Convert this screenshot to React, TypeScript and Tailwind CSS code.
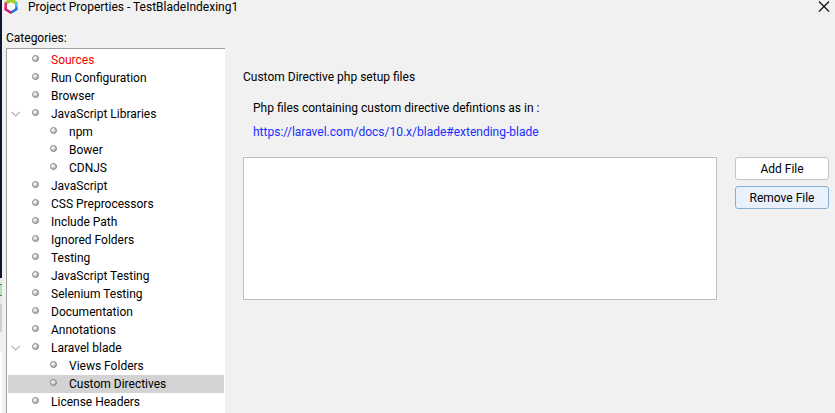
import React from "react";

type Item = { label: string; level: 1 | 2; open?: boolean; error?: boolean; selected?: boolean };

const items: Item[] = [
  { label: "Sources", level: 1, error: true },
  { label: "Run Configuration", level: 1 },
  { label: "Browser", level: 1 },
  { label: "JavaScript Libraries", level: 1, open: true },
  { label: "npm", level: 2 },
  { label: "Bower", level: 2 },
  { label: "CDNJS", level: 2 },
  { label: "JavaScript", level: 1 },
  { label: "CSS Preprocessors", level: 1 },
  { label: "Include Path", level: 1 },
  { label: "Ignored Folders", level: 1 },
  { label: "Testing", level: 1 },
  { label: "JavaScript Testing", level: 1 },
  { label: "Selenium Testing", level: 1 },
  { label: "Documentation", level: 1 },
  { label: "Annotations", level: 1 },
  { label: "Laravel blade", level: 1, open: true },
  { label: "Views Folders", level: 2 },
  { label: "Custom Directives", level: 2, selected: true },
  { label: "License Headers", level: 1 },
];

function Ball() {
  return (
    <svg width="8" height="8" viewBox="0 0 8 8" className="mb-0.5 shrink-0" aria-hidden="true">
      <defs>
        <radialGradient id="ball" cx="0.36" cy="0.36" r="0.65">
          <stop offset="0" stopColor="#ffffff" />
          <stop offset="0.45" stopColor="#dcdcdc" />
          <stop offset="1" stopColor="#a0a0a0" />
        </radialGradient>
      </defs>
      <circle cx="3.5" cy="3.5" r="3" fill="url(#ball)" stroke="#808080" strokeWidth="0.9" />
    </svg>
  );
}

function Chevron() {
  return (
    <svg width="11" height="6" viewBox="0 0 11 6" fill="none" aria-hidden="true">
      <path d="M1.5 0.8 5.7 5 9.9 0.8" stroke="#b0b0b0" strokeWidth="1.2" />
    </svg>
  );
}

function Logo() {
  return (
    <svg width="14" height="14" viewBox="0 0 14 14" className="shrink-0" aria-hidden="true">
      <path d="M0.5 2 5 -1h4l4.5 3L10 4.5 7 3 4 4.5Z" fill="#a5ce2a" />
      <path d="M0.5 2 4 4v5l3 2v3L0.5 10Z" fill="#e02468" />
      <path d="M0.5 7 3.5 8.5 7 11v3L0.5 10Z" fill="#c4267c" />
      <path d="M13.5 2 10 4v5l3.5-2Z" fill="#35c0ee" />
      <path d="M13.5 6.5 10 8.5 7 10.5V14l6.5-4Z" fill="#1b6fd6" />
      <path d="M7 2.2 11 4.3v4.4L7 11 3 8.7V4.3Z" fill="#ffffff" />
      <path d="M3 4.3 7 6.4 11 4.3M7 6.4V11" stroke="#e2e6e8" strokeWidth="0.7" fill="none" />
    </svg>
  );
}

export default function App() {
  return (
    <div className="flex h-screen overflow-hidden bg-[#f1f1f1] font-['Roboto','Open_Sans',sans-serif] text-xs text-black">
      <div className="flex w-0.5 shrink-0 flex-col" aria-hidden="true">
        <div className="h-[278px] bg-[#0d1730]" />
        <div className="h-1.5 bg-[#e8e8e8]" />
        <div className="h-3 border-y border-[#2e9a3c] bg-[#b9dfb9]" />
        <div className="h-2 bg-[#e8e8e8]" />
        <div className="h-7 bg-[#d0d0d0]" />
        <div className="h-5" />
        <div className="grow bg-white" />
      </div>
      <div className="flex min-w-0 grow flex-col">
        <header className="flex h-7 shrink-0 items-start justify-between pl-0.5 pr-1">
          <div className="flex gap-2.5">
            <Logo />
            <h1 className="leading-[14px]">Project Properties - TestBladeIndexing1</h1>
          </div>
          <button type="button" aria-label="Close" className="p-px">
            <svg width="12" height="12" viewBox="0 0 12 12" aria-hidden="true">
              <path d="M1 0.5 11 10.5M11 0.5 1 10.5" stroke="#111111" strokeWidth="1.2" />
            </svg>
          </button>
        </header>
        <div className="flex min-h-0 grow">
          <nav className="flex w-[223px] shrink-0 flex-col pl-1" aria-labelledby="categories">
            <h2 id="categories" className="h-5 shrink-0 leading-5">Categories:</h2>
            <ul className="min-h-0 grow overflow-hidden border-l border-t border-[#a0a0a0] bg-white pl-px pt-0.5">
              {items.map((item) => (
                <li key={item.label} className={item.selected ? "mr-px bg-[#d3d3d3]" : "mr-px"}>
                  <button
                    type="button"
                    className={`flex h-[18px] w-full items-center text-left ${item.level === 2 ? "pl-[42px]" : "pl-0.5"} ${item.error ? "text-[#f50000]" : ""}`}
                  >
                    {item.level === 1 && <span className="w-[22px] shrink-0">{item.open && <Chevron />}</span>}
                    <Ball />
                    <span className="pl-[11px] leading-[18px]">{item.label}</span>
                  </button>
                </li>
              ))}
            </ul>
          </nav>
          <main className="min-w-0 grow pl-[18px] pr-1.5 pt-10">
            <h2 className="leading-[18px]">Custom Directive php setup files</h2>
            <div className="flex flex-col items-start gap-1.5 pb-4 pl-2.5 pt-[13px]">
              <p className="leading-[18px]">Php files containing custom directive defintions as in :</p>
              <a href="https://laravel.com/docs/10.x/blade#extending-blade" className="leading-[18px] text-[#1a2eff]">
                https://laravel.com/docs/10.x/blade#extending-blade
              </a>
            </div>
            <div className="flex gap-[18px]">
              <select multiple aria-label="Custom directive files" className="h-[143px] min-w-0 grow border border-[#c0c0c0] bg-white" />
              <div className="flex w-[94px] shrink-0 flex-col gap-1.5">
                <button type="button" className="h-[23px] rounded-[3px] border border-[#c4c4c4] bg-white">Add File</button>
                <button type="button" className="h-[23px] rounded-[3px] border border-[#89b0d4] bg-[#e8f1fc]">Remove File</button>
              </div>
            </div>
          </main>
        </div>
      </div>
    </div>
  );
}
